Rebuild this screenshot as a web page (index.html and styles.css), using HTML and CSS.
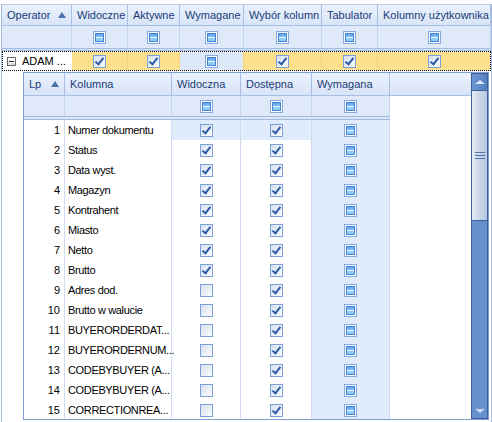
FILE: index.html
```html
<!DOCTYPE html>
<html lang="pl">
  <head>
    <meta charset="UTF-8" />
    <title>Operatorzy</title>
    <link rel="stylesheet" href="styles.css">
  </head>
  <body>
    <div class="grid">
      <div class="orow ohead">
        <div class="hc">Operator<span class="sort"></span></div>
        <div class="hc">Widoczne</div>
        <div class="hc">Aktywne</div>
        <div class="hc">Wymagane</div>
        <div class="hc">Wybór kolumn</div>
        <div class="hc">Tabulator</div>
        <div class="hc">Kolumny użytkownika</div>
      </div>
      <div class="orow ofilter">
        <div class="fc"></div>
        <div class="fc"><span class="cb null"></span></div>
        <div class="fc"><span class="cb null"></span></div>
        <div class="fc"><span class="cb null"></span></div>
        <div class="fc"><span class="cb null"></span></div>
        <div class="fc"><span class="cb null"></span></div>
        <div class="fc"><span class="cb null"></span></div>
      </div>
      <div class="sep"></div>
      <div class="orow master">
        <div class="mc op"><span class="expander"></span>ADAM ...</div>
        <div class="mc"><span class="cb on"></span></div>
        <div class="mc"><span class="cb on"></span></div>
        <div class="mc ro"><span class="cb null"></span></div>
        <div class="mc"><span class="cb on"></span></div>
        <div class="mc"><span class="cb on"></span></div>
        <div class="mc"><span class="cb on"></span></div>
      </div>
      <div class="detail">
        <div class="inner">
          <div class="ibody">
            <div class="irow ihead">
              <div class="hc">Lp<span class="sort"></span></div>
              <div class="hc">Kolumna</div>
              <div class="hc">Widoczna</div>
              <div class="hc">Dostępna</div>
              <div class="hc">Wymagana</div>
              <div class="hc last"></div>
            </div>
            <div class="irow ifilter">
              <div class="fc"></div>
              <div class="fc"></div>
              <div class="fc"><span class="cb null"></span></div>
              <div class="fc"><span class="cb null"></span></div>
              <div class="fc"><span class="cb null"></span></div>
              <div class="fc empty"></div>
            </div>
            <div class="isep"></div>

            <div class="irow data focused">
              <div class="lp">1</div><div class="name">Numer dokumentu</div>
              <div class="c vis"><span class="cb on"></span></div><div class="c avail"><span class="cb on"></span></div>
              <div class="c ro"><span class="cb null"></span></div><div class="rest"></div>
            </div>
            <div class="irow data">
              <div class="lp">2</div><div class="name">Status</div>
              <div class="c vis"><span class="cb on"></span></div><div class="c avail"><span class="cb on"></span></div>
              <div class="c ro"><span class="cb null"></span></div><div class="rest"></div>
            </div>
            <div class="irow data">
              <div class="lp">3</div><div class="name">Data wyst.</div>
              <div class="c vis"><span class="cb on"></span></div><div class="c avail"><span class="cb on"></span></div>
              <div class="c ro"><span class="cb null"></span></div><div class="rest"></div>
            </div>
            <div class="irow data">
              <div class="lp">4</div><div class="name">Magazyn</div>
              <div class="c vis"><span class="cb on"></span></div><div class="c avail"><span class="cb on"></span></div>
              <div class="c ro"><span class="cb null"></span></div><div class="rest"></div>
            </div>
            <div class="irow data">
              <div class="lp">5</div><div class="name">Kontrahent</div>
              <div class="c vis"><span class="cb on"></span></div><div class="c avail"><span class="cb on"></span></div>
              <div class="c ro"><span class="cb null"></span></div><div class="rest"></div>
            </div>
            <div class="irow data">
              <div class="lp">6</div><div class="name">Miasto</div>
              <div class="c vis"><span class="cb on"></span></div><div class="c avail"><span class="cb on"></span></div>
              <div class="c ro"><span class="cb null"></span></div><div class="rest"></div>
            </div>
            <div class="irow data">
              <div class="lp">7</div><div class="name">Netto</div>
              <div class="c vis"><span class="cb on"></span></div><div class="c avail"><span class="cb on"></span></div>
              <div class="c ro"><span class="cb null"></span></div><div class="rest"></div>
            </div>
            <div class="irow data">
              <div class="lp">8</div><div class="name">Brutto</div>
              <div class="c vis"><span class="cb on"></span></div><div class="c avail"><span class="cb on"></span></div>
              <div class="c ro"><span class="cb null"></span></div><div class="rest"></div>
            </div>
            <div class="irow data">
              <div class="lp">9</div><div class="name">Adres dod.</div>
              <div class="c vis"><span class="cb"></span></div><div class="c avail"><span class="cb on"></span></div>
              <div class="c ro"><span class="cb null"></span></div><div class="rest"></div>
            </div>
            <div class="irow data">
              <div class="lp">10</div><div class="name">Brutto w walucie</div>
              <div class="c vis"><span class="cb"></span></div><div class="c avail"><span class="cb on"></span></div>
              <div class="c ro"><span class="cb null"></span></div><div class="rest"></div>
            </div>
            <div class="irow data">
              <div class="lp">11</div><div class="name">BUYERORDERDAT...</div>
              <div class="c vis"><span class="cb"></span></div><div class="c avail"><span class="cb on"></span></div>
              <div class="c ro"><span class="cb null"></span></div><div class="rest"></div>
            </div>
            <div class="irow data">
              <div class="lp">12</div><div class="name">BUYERORDERNUM...</div>
              <div class="c vis"><span class="cb"></span></div><div class="c avail"><span class="cb on"></span></div>
              <div class="c ro"><span class="cb null"></span></div><div class="rest"></div>
            </div>
            <div class="irow data">
              <div class="lp">13</div><div class="name">CODEBYBUYER (A...</div>
              <div class="c vis"><span class="cb"></span></div><div class="c avail"><span class="cb on"></span></div>
              <div class="c ro"><span class="cb null"></span></div><div class="rest"></div>
            </div>
            <div class="irow data">
              <div class="lp">14</div><div class="name">CODEBYBUYER (A...</div>
              <div class="c vis"><span class="cb"></span></div><div class="c avail"><span class="cb on"></span></div>
              <div class="c ro"><span class="cb null"></span></div><div class="rest"></div>
            </div>
            <div class="irow data">
              <div class="lp">15</div><div class="name">CORRECTIONREA...</div>
              <div class="c vis"><span class="cb"></span></div><div class="c avail"><span class="cb on"></span></div>
              <div class="c ro"><span class="cb null"></span></div><div class="rest"></div>
            </div>
          </div>
          <div class="vscroll">
            <div class="sbtn up"><span class="arrow-up"></span></div>
            <div class="thumb"><span class="grip"></span></div>
            <div class="track"><span class="arrow-down"></span></div>
          </div>
        </div>
      </div>
    </div>
  </body>
</html>
```

FILE: styles.css
```css
body {
  margin: 0;
  background: #fff;
  font-family: "Liberation Sans", Arial, sans-serif;
  font-size: 11px;
  color: #000;
}
.grid {
  width: 491px;
  height: 418px;
  margin: 4px 0 0 1px;
  box-sizing: border-box;
  border-left: 1px solid #a3badf;
  border-right: 1px solid #a3badf;
  overflow: hidden;
}
.orow {
  display: grid;
  grid-template-columns: 70px 56px 52px 64px 78px 56px 113px;
}
.hc {
  box-sizing: border-box;
  display: flex;
  align-items: center;
  justify-content: space-between;
  padding: 0 5px;
  white-space: nowrap;
  overflow: hidden;
  color: #1b3b78;
  background: linear-gradient(#eaf1fc, #d8e5f8);
  border-right: 1px solid #a7bfe3;
  border-bottom: 1px solid #a7bfe3;
}
.ohead .hc {
  height: 22px;
  border-top: 1px solid #bcd0ec;
}
.sort {
  width: 0;
  height: 0;
  border-left: 4px solid transparent;
  border-right: 4px solid transparent;
  border-bottom: 6px solid #4a6fa9;
}
.fc {
  box-sizing: border-box;
  display: flex;
  align-items: center;
  justify-content: center;
  background: #dfe9f9;
  border-right: 1px solid #c3d4ee;
}
.ofilter .fc {
  height: 22px;
}
.sep {
  height: 3px;
  box-sizing: border-box;
  border-top: 1px solid #a3badf;
  border-bottom: 1px solid #a3badf;
  background: #dbe7f8;
}
.master {
  height: 20px;
  box-sizing: border-box;
  border: 1px dotted #000;
  grid-template-columns: 69px 56px 52px 64px 78px 56px 112px;
}
.mc {
  display: flex;
  align-items: center;
  justify-content: center;
  background: #fee08c;
  border-right: 1px solid #f1d283;
}
.mc:last-child {
  border-right: 0;
}
.mc.op {
  justify-content: flex-start;
  padding-left: 4px;
  background: #fff;
  border-right: 0;
}
.mc.ro {
  background: #dde9f9;
}
.expander {
  width: 9px;
  height: 9px;
  box-sizing: border-box;
  margin-right: 6px;
  border: 1px solid #6a6a6a;
  background: linear-gradient(#ffffff, #dcdcdc);
  display: flex;
  align-items: center;
  justify-content: center;
}
.expander::after {
  content: '';
  width: 5px;
  height: 1px;
  background: #333;
}
.detail {
  padding: 1px 0 0 21px;
}
.inner {
  display: flex;
  width: 466px;
  height: 348px;
  box-sizing: border-box;
  border: 1px solid #7f9fd3;
}
.ibody {
  width: 447px;
  overflow: hidden;
}
.irow {
  display: grid;
  grid-template-columns: 41px 107px 69px 71px 78px 81px;
}
.ihead .hc {
  height: 23px;
}
.ihead .hc.last {
  border-right: 0;
}
.ifilter .fc {
  height: 20px;
}
.ifilter .fc.empty {
  background: #fff;
  border-right: 0;
}
.isep {
  width: 366px;
  height: 4px;
  box-sizing: border-box;
  border-top: 1px solid #a3badf;
  border-bottom: 1px solid #a3badf;
  background: #dbe7f8;
}
.data > div {
  height: 20px;
  box-sizing: border-box;
  border-right: 1px solid #d0ddf0;
  display: flex;
  align-items: center;
  white-space: nowrap;
  overflow: hidden;
}
.data .lp {
  justify-content: flex-end;
  padding-right: 4px;
}
.data .name {
  padding-left: 3px;
  letter-spacing: -0.35px;
  overflow: visible;
}
.data .c {
  justify-content: center;
}
.data .ro {
  background: #e0ebfb;
}
.focused .vis,
.focused .avail {
  background: #e0ebfb;
}
.data .rest {
  border-right: 0;
}
.cb {
  position: relative;
  width: 13px;
  height: 13px;
  box-sizing: border-box;
  border: 1px solid #7aa0d8;
  background: linear-gradient(135deg, #d6e0ef, #fbfcfe);
}
.cb.on::after {
  content: '';
  position: absolute;
  left: 3px;
  top: 0;
  width: 3px;
  height: 7px;
  border: solid #2c5aa6;
  border-width: 0 2px 2px 0;
  transform: rotate(38deg);
}
.cb.null {
  border-color: #86aade;
  background: #fff;
}
.cb.null::after {
  content: '';
  position: absolute;
  top: 1px;
  left: 1px;
  right: 1px;
  bottom: 1px;
  border: 1px solid #3f84d5;
  background: linear-gradient(#5ea4ec, #86c2f3 45%, #e6f4ff 45%, #e6f4ff 62%, #8fcdf7 62%);
}
.vscroll {
  width: 17px;
  display: flex;
  flex-direction: column;
}
.sbtn {
  height: 18px;
  box-sizing: border-box;
  border: 1px solid #3e5f99;
  background: linear-gradient(90deg, #6d96d3, #5480c3);
  display: flex;
  align-items: center;
  justify-content: center;
}
.arrow-up {
  width: 0;
  height: 0;
  border-left: 5px solid transparent;
  border-right: 5px solid transparent;
  border-bottom: 4px solid #dfe9f8;
}
.thumb {
  height: 130px;
  box-sizing: border-box;
  border: 1px solid #3e5f99;
  border-top: 0;
  background: linear-gradient(90deg, #e4eaf4, #ccd8e9 45%, #b8c9e0);
  display: flex;
  align-items: center;
  justify-content: center;
}
.grip {
  width: 10px;
  height: 7px;
  background: repeating-linear-gradient(#4e73aa 0 1px, transparent 1px 3px);
}
.track {
  flex: 1;
  box-sizing: border-box;
  border: 1px solid #3e5f99;
  border-top: 0;
  background: #6690cc;
  display: flex;
  align-items: flex-end;
  justify-content: center;
  padding-bottom: 5px;
}
.arrow-down {
  width: 0;
  height: 0;
  border-left: 5px solid transparent;
  border-right: 5px solid transparent;
  border-top: 4px solid #c9d9f0;
}
```
